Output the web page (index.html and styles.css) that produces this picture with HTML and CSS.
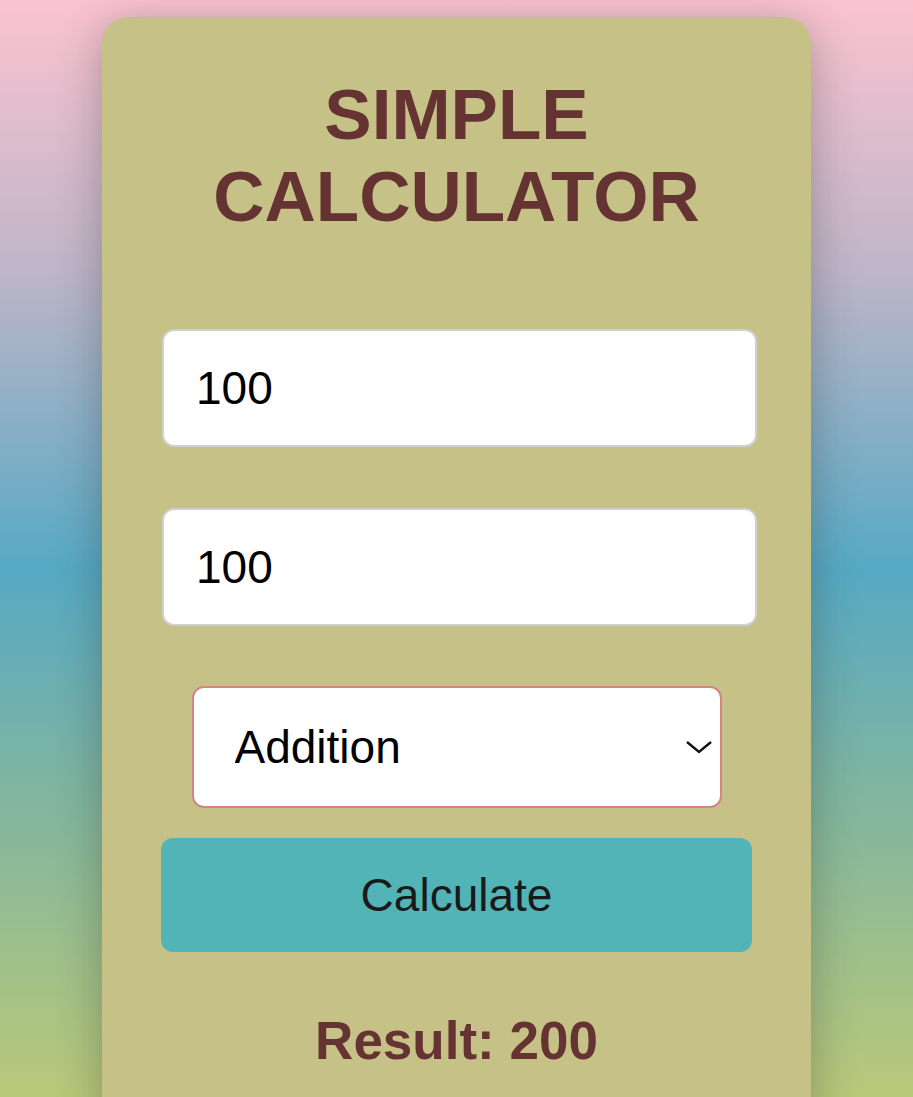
FILE: index.html
```html
<!DOCTYPE html>
<html lang="en">
<head>
    <meta charset="UTF-8">
    <meta name="viewport" content="width=device-width, initial-scale=1.0">
    <title>Simple Calculator</title>
    <link rel="stylesheet" href="styles.css">
</head>
<body>
    <div class="calculator">
        <h1>SIMPLE CALCULATOR</h1>

        <input type="number" id="num1" class="field" value="100">
        <input type="number" id="num2" class="field" value="100">

        <div class="select-wrap">
            <select id="operation" class="operation">
                <option value="add">Addition</option>
                <option value="sub">Subtraction</option>
                <option value="mul">Multiplication</option>
                <option value="div">Division</option>
            </select>
            <svg class="chevron" width="28" height="14" viewBox="0 0 28 14">
                <path d="M2 2 L14 12 L26 2" fill="none" stroke="#111" stroke-width="2.4"/>
            </svg>
        </div>

        <button class="calc-btn" onclick="calculate()">Calculate</button>

        <h2 id="result">Result: 200</h2>
    </div>

    <script>
        function calculate() {
            const a = parseFloat(document.getElementById("num1").value) || 0;
            const b = parseFloat(document.getElementById("num2").value) || 0;
            const op = document.getElementById("operation").value;
            let res = 0;
            if (op === "add") res = a + b;
            if (op === "sub") res = a - b;
            if (op === "mul") res = a * b;
            if (op === "div") res = b === 0 ? "Error" : a / b;
            document.getElementById("result").textContent = "Result: " + res;
        }
    </script>
</body>
</html>
```

FILE: styles.css
```css
html, body {
    height: 100%;
}
body {
    margin: 0;
    font-family: "Liberation Sans", Arial, sans-serif;
    background: linear-gradient(to bottom, #fbc3d0 0%, #bdb5c8 25%, #56a9c4 52%, #7fb5a0 72%, #b9c979 100%);
    overflow: hidden;
}
.calculator {
    width: 709px;
    margin: 17px auto 0;
    padding: 57px 0 80px;
    box-sizing: border-box;
    background-color: #c5c187;
    border-radius: 26px;
    box-shadow: 0 8px 45px rgba(40, 40, 40, 0.33);
    display: flex;
    flex-direction: column;
    align-items: center;
}
h1 {
    margin: 0 0 91px;
    font-size: 71px;
    line-height: 82px;
    font-weight: bold;
    color: #663333;
    text-align: center;
    width: 520px;
}
.field {
    width: 595px;
    height: 118px;
    box-sizing: border-box;
    margin: 0 0 61px 6px;
    padding: 0 32px;
    border: 2px solid #d0d0d0;
    border-radius: 12px;
    background: #fff;
    font-family: "Liberation Sans", Arial, sans-serif;
    font-size: 46px;
    color: #000;
    outline: none;
    -moz-appearance: textfield;
}
.field::-webkit-outer-spin-button,
.field::-webkit-inner-spin-button {
    -webkit-appearance: none;
    margin: 0;
}
.field + .field {
    margin-bottom: 60px;
}
.select-wrap {
    position: relative;
    width: 530px;
    height: 122px;
    margin: 0 0 30px 0;
}
.operation {
    width: 100%;
    height: 100%;
    box-sizing: border-box;
    padding: 0 60px 0 41px;
    border: 2px solid #d28585;
    border-radius: 12px;
    background: #fff;
    font-family: "Liberation Sans", Arial, sans-serif;
    font-size: 46px;
    color: #000;
    appearance: none;
    -webkit-appearance: none;
    outline: none;
}
.chevron {
    position: absolute;
    right: 9px;
    top: 54px;
    pointer-events: none;
}
.calc-btn {
    width: 591px;
    height: 114px;
    margin: 0 0 58px 0;
    border: none;
    border-radius: 12px;
    background-color: #52b4b6;
    font-family: "Liberation Sans", Arial, sans-serif;
    font-size: 46px;
    color: #1a1a1a;
    cursor: pointer;
}
h2 {
    margin: 0;
    font-size: 53px;
    font-weight: bold;
    color: #663333;
}
```
